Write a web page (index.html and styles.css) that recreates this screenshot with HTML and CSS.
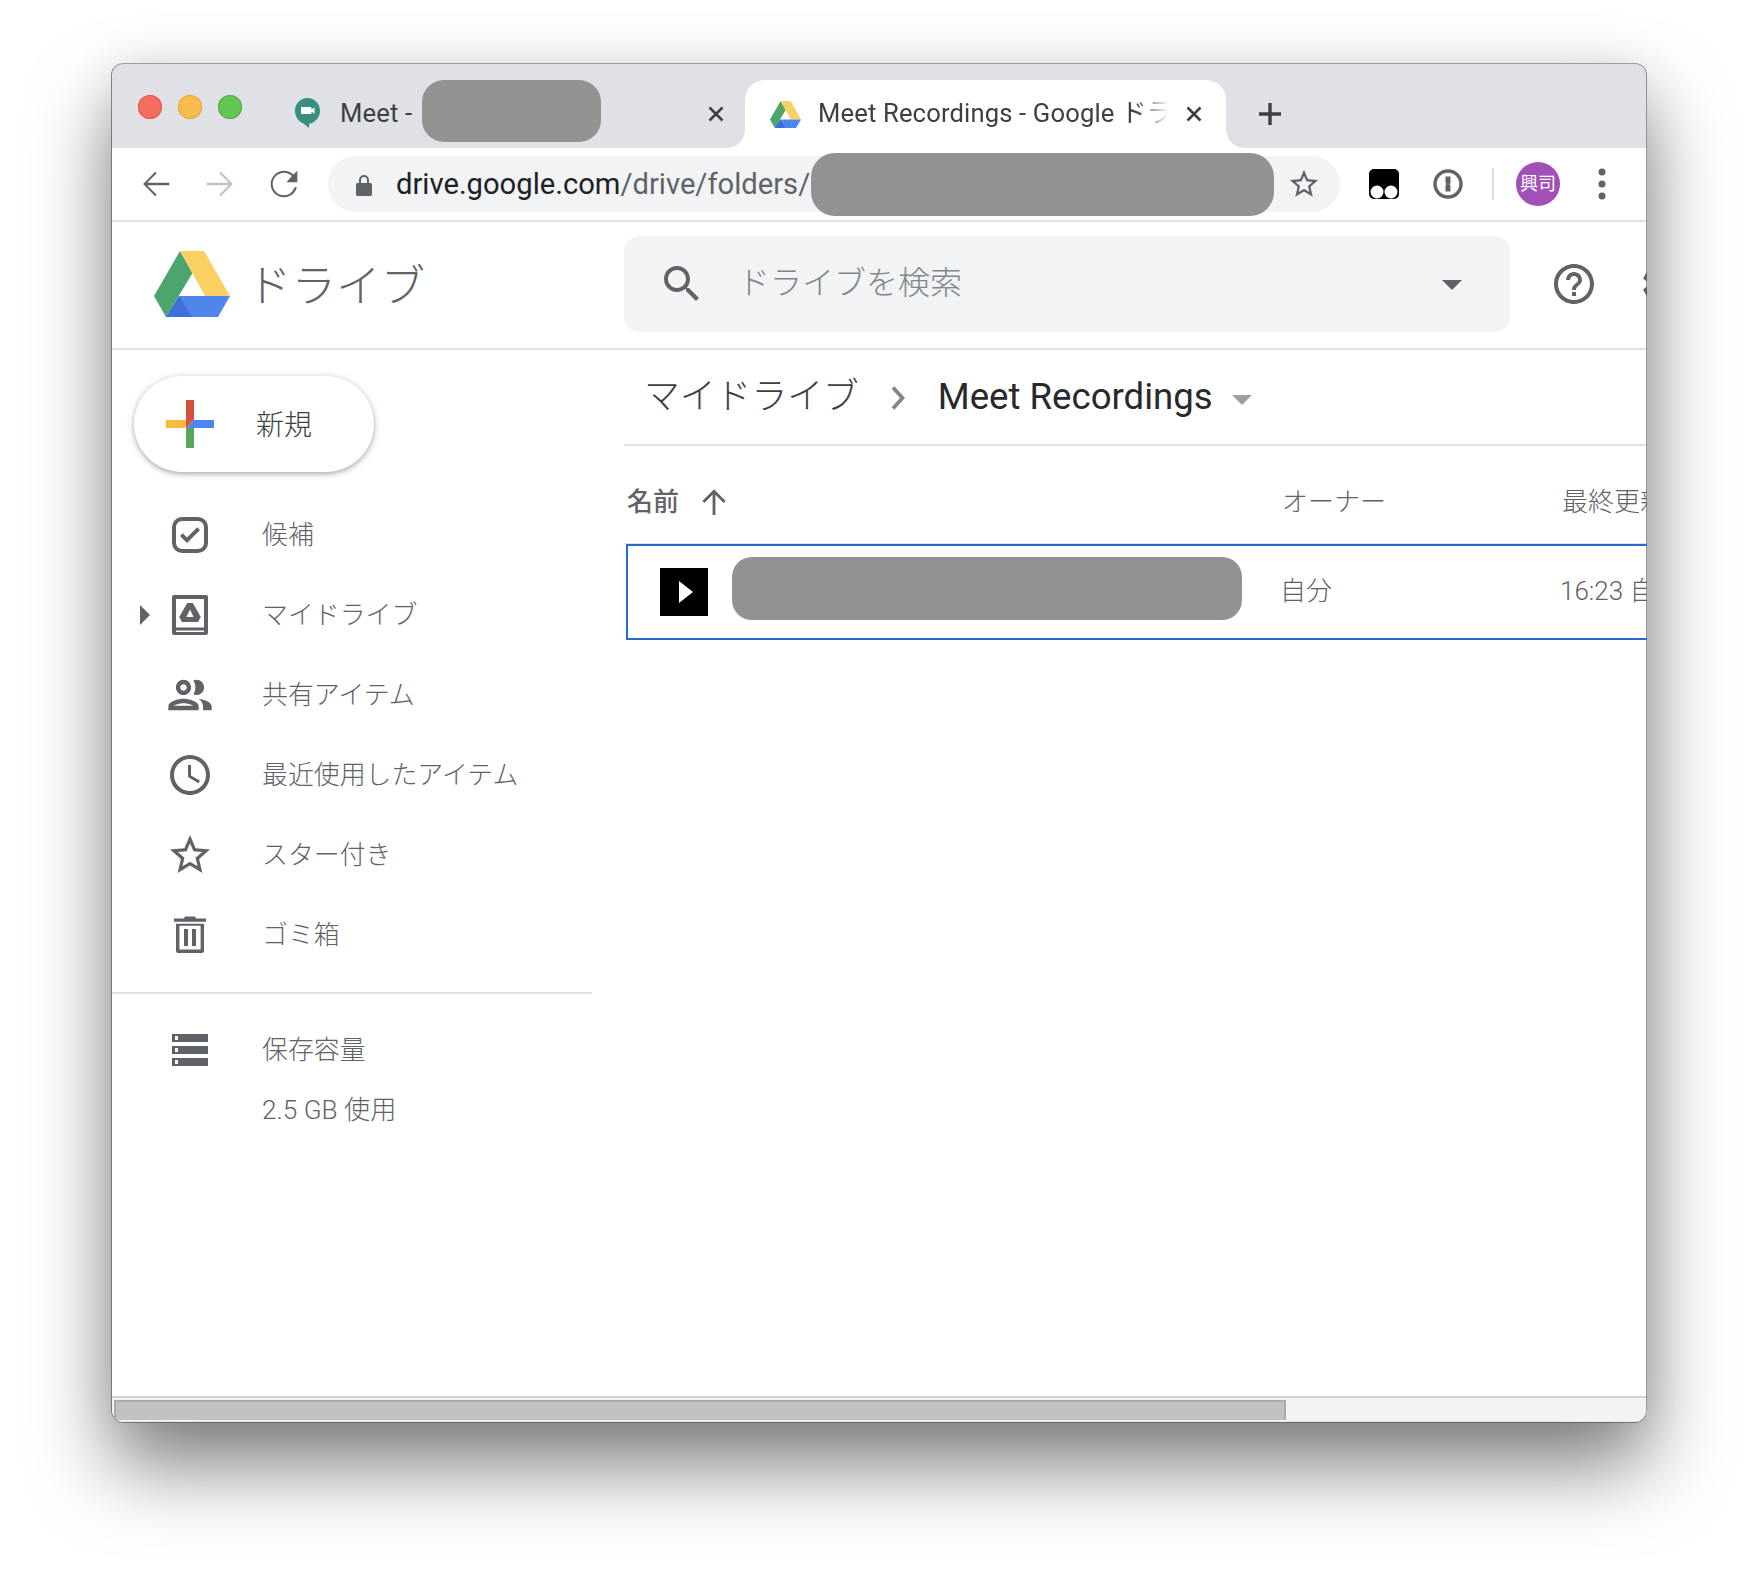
FILE: index.html
```html
<!DOCTYPE html>
<html lang="ja">
<head>
<meta charset="utf-8">
<title>Meet Recordings - Google ドライブ</title>
<link rel="stylesheet" href="styles.css">
</head>
<body>
<div class="window">
  <div class="tabstrip">
    <div class="lights"><i class="light red"></i><i class="light yellow"></i><i class="light green"></i></div>
    <div class="tab tab-meet">
      <svg class="fav-meet" viewBox="0 0 25 30"><path fill="#3a8e81" d="M12.5 0C19.4 0 25 5.6 25 12.5c0 6.6-4.6 12.2-11 13.4V30c-1.5-1.200-4-3.200-5.500-4.600C3.600 23.800 0 18.700 0 12.500 0 5.600 5.600 0 12.500 0z"/><path fill="#fff" d="M6 9h9.500c.6 0 1 .4 1 1v1.700l3-2.400v6.600l-3-2.400V15c0 .6-.4 1-1 1H6z"/></svg>
      <span class="tab-title">Meet -</span>
      <span class="redact redact-tab"></span>
      <svg class="tab-close" viewBox="0 0 20 20"><path d="M3.500 3.500l13 13M16.500 3.500l-13 13"/></svg>
    </div>
    <div class="tab tab-active">
      <svg class="fav-drive" viewBox="0 0 76 66"><use href="#drive-mark"/></svg>
      <span class="tab-title tab-fade">Meet Recordings - Google ドライブ</span>
      <svg class="tab-close" viewBox="0 0 20 20"><path d="M3.500 3.500l13 13M16.500 3.500l-13 13"/></svg>
    </div>
    <svg class="newtab" viewBox="0 0 24 24"><path d="M12 1v22M1 12h22"/></svg>
  </div>

  <div class="toolbar">
    <svg class="tool" viewBox="0 0 24 24"><path d="M20 11.200H6.700l5.700-5.700-.9-.9L4.300 12l7.200 7.400.9-.9-5.700-5.700H20z"/></svg>
    <svg class="tool tool-off" viewBox="0 0 24 24"><path d="M4 11.200h13.300l-5.700-5.700.9-.9 7.200 7.400-7.200 7.400-.9-.9 5.700-5.700H4z"/></svg>
    <svg class="tool" viewBox="0 0 24 24"><path d="M17.650 6.350C16.200 4.900 14.210 4 12 4c-4.420 0-7.990 3.580-7.990 8s3.570 8 7.990 8c3.730 0 6.840-2.550 7.730-6h-1.400c-.82 2.800-3.340 4.800-6.330 4.800-3.760 0-6.800-3.040-6.800-6.800s3.040-6.800 6.800-6.800c1.880 0 3.550.78 4.770 2L13.500 11H20V4z"/></svg>
    <div class="omnibox">
      <svg class="lock" viewBox="0 0 16 22"><path d="M3 9V6a5 5 0 0 1 10 0v3h1.500c.8 0 1.500.7 1.500 1.500v10c0 .8-.7 1.500-1.500 1.500h-13C.7 22 0 21.300 0 20.500v-10C0 9.700.7 9 1.500 9zm2 0h6V6a3 3 0 0 0-6 0z"/></svg>
      <span class="url"><b>drive.google.com</b>/drive/folders/</span>
      <span class="redact redact-url"></span>
      <svg class="star" viewBox="0 0 24 24"><path d="M22 9.240l-7.190-.62L12 2 9.190 8.630 2 9.240l5.460 4.730L5.820 21 12 17.270 18.180 21l-1.630-7.030L22 9.240zM12 15.400l-3.760 2.270 1-4.280-3.320-2.880 4.380-.38L12 6.100l1.710 4.040 4.380.38-3.320 2.880 1 4.280L12 15.400z"/></svg>
    </div>
    <svg class="ext-tamper" viewBox="0 0 30 30"><rect width="30" height="30" rx="5"/><circle cx="8" cy="23" r="6.500" fill="#fff"/><circle cx="22" cy="23" r="6.500" fill="#fff"/></svg>
    <svg class="ext-1p" viewBox="0 0 30 30"><circle cx="15" cy="15" r="13" fill="none" stroke="#5f6368" stroke-width="3.400"/><path fill="#5f6368" d="M12.500 7.500h5v6.500l-1 1.200 1 1.300v6h-5v-6.500l1-1-1-1z"/></svg>
    <span class="ext-sep"></span>
    <span class="avatar">興司</span>
    <svg class="ext-menu" viewBox="0 0 8 32"><circle cx="4" cy="4" r="3.500"/><circle cx="4" cy="16" r="3.500"/><circle cx="4" cy="28" r="3.500"/></svg>
  </div>

  <div class="drive-head">
    <div class="brand">
      <svg class="brand-logo" viewBox="0 0 76 66">
        <defs>
          <g id="drive-mark">
            <path fill="#4ba56c" d="M26 0l12.500 22L12 66 0 45z"/>
            <path fill="#fbd063" d="M26 0h24l26 45H51z"/>
            <path fill="#4f86ec" d="M25 45h51L64 66H12z"/>
            <path fill="#3f6fd8" d="M25 45l13 21H12z"/>
          </g>
        </defs>
        <use href="#drive-mark"/>
      </svg>
      <span class="brand-name">ドライブ</span>
    </div>
    <div class="search">
      <svg class="search-icon" viewBox="0 0 24 24"><path d="M15.500 14h-.79l-.28-.27C15.410 12.590 16 11.110 16 9.500 16 5.910 13.090 3 9.500 3S3 5.910 3 9.500 5.910 16 9.500 16c1.610 0 3.090-.59 4.230-1.570l.27.28v.79l5 4.990L20.490 19l-4.990-5zm-6 0C7.010 14 5 11.990 5 9.500S7.010 5 9.500 5 14 7.010 14 9.500 11.990 14 9.500 14z"/></svg>
      <span class="search-text">ドライブを検索</span>
      <span class="caret caret-search"></span>
    </div>
    <svg class="help" viewBox="0 0 24 24"><path d="M11 18h2v-2h-2v2zm1-16C6.480 2 2 6.480 2 12s4.480 10 10 10 10-4.480 10-10S17.520 2 12 2zm0 18c-4.410 0-8-3.590-8-8s3.590-8 8-8 8 3.590 8 8-3.590 8-8 8zm0-14c-2.210 0-4 1.790-4 4h2c0-1.100.9-2 2-2s2 .9 2 2c0 2-3 1.750-3 5h2c0-2.250 3-2.500 3-5 0-2.210-1.790-4-4-4z"/></svg>
    <svg class="gear" viewBox="0 0 24 24"><path d="M19.140 12.940c.04-.3.060-.61.060-.94 0-.32-.02-.64-.07-.94l2.030-1.580c.18-.14.23-.41.120-.61l-1.920-3.320c-.12-.22-.37-.29-.59-.22l-2.390.96c-.5-.38-1.030-.7-1.620-.94l-.36-2.540c-.04-.24-.24-.41-.48-.41h-3.840c-.24 0-.43.170-.47.410l-.36 2.540c-.59.240-1.130.57-1.620.94l-2.390-.96c-.22-.08-.47 0-.59.220L2.740 8.870c-.12.210-.08.470.12.610l2.030 1.580c-.05.300-.09.630-.09.940s.02.640.07.940l-2.030 1.580c-.18.140-.23.410-.12.610l1.920 3.320c.12.220.37.290.59.220l2.390-.96c.5.380 1.030.7 1.620.94l.36 2.540c.05.240.24.410.48.410h3.840c.24 0 .44-.17.470-.41l.36-2.540c.59-.24 1.130-.56 1.620-.94l2.390.96c.22.080.47 0 .59-.22l1.920-3.320c.12-.22.070-.47-.12-.61l-2.010-1.580z"/></svg>
  </div>

  <div class="drive-body">
    <aside class="sidebar">
      <div class="new-btn">
        <svg class="new-plus" viewBox="0 0 48 48">
          <path fill="#d94f3d" d="M20 0h8v20l-8 8z"/>
          <path fill="#f5bb41" d="M0 20h20v8H0z"/>
          <path fill="#57a65b" d="M20 28h8v20h-8z"/>
          <path fill="#4f86ec" d="M28 20h20v8H20z"/>
        </svg>
        <span class="new-label">新規</span>
      </div>
      <nav class="nav">
        <div class="nav-row">
          <span class="nav-arrow"></span>
          <svg class="nav-icon" viewBox="0 0 24 24"><path fill-rule="evenodd" d="M8 3h8a5 5 0 0 1 5 5v8a5 5 0 0 1-5 5H8a5 5 0 0 1-5-5V8a5 5 0 0 1 5-5zm0 2a3 3 0 0 0-3 3v8a3 3 0 0 0 3 3h8a3 3 0 0 0 3-3V8a3 3 0 0 0-3-3z"/><path d="M10.500 16L7 12.500l1.400-1.400 2.100 2.100 5.100-5.100L17 9.500z"/></svg>
          <span class="nav-label">候補</span>
        </div>
        <div class="nav-row">
          <span class="nav-arrow"><i class="tri"></i></span>
          <svg class="nav-icon" viewBox="0 0 24 24"><path fill-rule="evenodd" d="M4 2h16c.6 0 1 .4 1 1v18c0 .6-.4 1-1 1H4c-.6 0-1-.4-1-1V3c0-.6.4-1 1-1zm1 2v14.300h14V4zm0 15.800v.7h14v-.7z"/><path fill-rule="evenodd" d="M10.600 6h2.800l4 7-1.400 2.500H8L6.600 13zm1.400 3.200L10.200 13h3.600z"/></svg>
          <span class="nav-label">マイドライブ</span>
        </div>
        <div class="nav-row">
          <span class="nav-arrow"></span>
          <svg class="nav-icon nav-icon-wide" viewBox="0 0 24 24"><path d="M9 13.750c-2.340 0-7 1.170-7 3.500V19h14v-1.750c0-2.330-4.660-3.500-7-3.500zM4.340 17c.84-.58 2.870-1.250 4.660-1.250s3.820.67 4.660 1.250H4.340zM9 12c1.930 0 3.500-1.570 3.500-3.500S10.930 5 9 5 5.500 6.570 5.500 8.500 7.070 12 9 12zm0-5c.83 0 1.500.67 1.500 1.500S9.830 10 9 10s-1.500-.67-1.500-1.500S8.170 7 9 7zm7.040 6.810c1.160.84 1.960 1.960 1.960 3.440V19h4v-1.750c0-2.020-3.500-3.170-5.960-3.440zM15 12c1.930 0 3.500-1.570 3.500-3.500S16.930 5 15 5c-.54 0-1.040.13-1.500.35.630.89 1 1.980 1 3.150s-.37 2.260-1 3.150c.46.220.96.350 1.500.350z"/></svg>
          <span class="nav-label">共有アイテム</span>
        </div>
        <div class="nav-row">
          <span class="nav-arrow"></span>
          <svg class="nav-icon" viewBox="0 0 24 24"><path d="M11.990 2C6.470 2 2 6.480 2 12s4.470 10 9.990 10C17.520 22 22 17.520 22 12S17.520 2 11.990 2zM12 20c-4.420 0-8-3.580-8-8s3.580-8 8-8 8 3.580 8 8-3.580 8-8 8zm.5-13H11v6l5.250 3.150.75-1.230-4.500-2.670z"/></svg>
          <span class="nav-label">最近使用したアイテム</span>
        </div>
        <div class="nav-row">
          <span class="nav-arrow"></span>
          <svg class="nav-icon" viewBox="0 0 24 24"><path d="M22 9.240l-7.190-.62L12 2 9.190 8.630 2 9.240l5.460 4.730L5.820 21 12 17.270 18.180 21l-1.630-7.030L22 9.240zM12 15.400l-3.760 2.270 1-4.280-3.320-2.880 4.380-.38L12 6.100l1.710 4.040 4.380.38-3.320 2.880 1 4.280L12 15.400z"/></svg>
          <span class="nav-label">スター付き</span>
        </div>
        <div class="nav-row">
          <span class="nav-arrow"></span>
          <svg class="nav-icon" viewBox="0 0 24 24"><path fill-rule="evenodd" d="M9.500 2.800h5l.5 1h5v1.600H4V3.800h5zM5 6.400h14V20c0 .6-.5 1-1 1H6c-.5 0-1-.4-1-1zm1.700 1V19.300h10.600V7.400zM9 9h2v8.500H9zm4 0h2v8.500h-2z"/></svg>
          <span class="nav-label">ゴミ箱</span>
        </div>
      </nav>
      <div class="side-rule"></div>
      <div class="nav-row">
        <span class="nav-arrow"></span>
        <svg class="nav-icon" viewBox="0 0 24 24"><path fill-rule="evenodd" d="M3 4h18v4H3zm1.500 1v2h1.500V5zM3 10h18v4H3zm1.500 1v2h1.500v-2zM3 16h18v4H3zm1.500 1v2h1.500v-2z"/></svg>
        <span class="nav-label">保存容量</span>
      </div>
      <div class="quota">2.5 GB 使用</div>
    </aside>

    <main class="main">
      <div class="crumbs">
        <span class="crumb-root">マイドライブ</span>
        <svg class="crumb-sep" viewBox="0 0 14 24"><path d="M2 1.500l9.500 10.500L2 22.500" /></svg>
        <span class="crumb-current">Meet Recordings</span>
        <span class="caret caret-crumb"></span>
      </div>
      <div class="list-head">
        <span class="col-name head-name"><span class="cell-text">名前</span><svg class="sort" viewBox="0 0 24 24"><path d="M12 2l-10 10 1.700 1.700 7.100-7.100V24h2.400V6.600l7.100 7.100L22 12z"/></svg></span>
        <span class="col-owner cell-text">オーナー</span>
        <span class="col-date cell-text">最終更新</span>
      </div>
      <div class="file-row">
        <span class="col-name file-name">
          <span class="thumb"><i class="play"></i></span>
          <span class="redact redact-file"></span>
        </span>
        <span class="col-owner cell-text">自分</span>
        <span class="col-date cell-text">16:23 自分</span>
      </div>
    </main>
  </div>

  <div class="hscroll"><div class="hthumb"></div></div>
</div>
</body>
</html>
```

FILE: styles.css
```css
* { box-sizing: border-box; }
html, body { margin: 0; background: #fff; }
body {
  width: 1758px;
  height: 1582px;
  padding: 63px 111px 0 112px;
  overflow: hidden;
  font-family: Roboto, "Noto Sans CJK JP", sans-serif;
  color: #5f6368;
}
.window {
  position: relative;
  width: 1535px;
  height: 1359px;
  display: flex;
  flex-direction: column;
  background: #fff;
  border-radius: 12px;
  overflow: hidden;
  box-shadow: -1px 0 0 rgba(90, 90, 90, .7), 0 1px 0 rgba(90, 90, 90, .7), 0 44px 80px rgba(0, 0, 0, .5), 0 0 50px rgba(0, 0, 0, .08);
}
.window::after {
  content: "";
  position: absolute;
  inset: 0;
  border-radius: 12px;
  box-shadow: inset 0 1px 0 rgba(90, 90, 90, .5), inset -1px 0 0 rgba(90, 90, 90, .6);
  pointer-events: none;
}
svg { display: block; flex: none; fill: #5f6368; }

/* tab strip */
.tabstrip {
  height: 85px;
  flex: none;
  display: flex;
  align-items: flex-end;
  background: #dfe1e6;
  padding-left: 26px;
}
.lights { display: flex; gap: 16px; align-self: flex-start; padding-top: 32px; width: 130px; }
.light { width: 24px; height: 24px; border-radius: 50%; display: block; }
.red { background: #f46d60; box-shadow: inset 0 0 0 1px #e2574a; }
.yellow { background: #f9bd4d; box-shadow: inset 0 0 0 1px #e3a63a; }
.green { background: #62c554; box-shadow: inset 0 0 0 1px #53ad46; }
.tab {
  height: 68px;
  display: flex;
  align-items: center;
  position: relative;
  font-size: 25.600px;
  color: #3c4043;
  white-space: nowrap;
}
.tab-meet { width: 477px; padding-left: 27px; }
.fav-meet { width: 25px; height: 30px; margin: -2px 20px 0 0; }
.tab-title { letter-spacing: .15px; line-height: 34px; margin-top: -2px; }
.tab-close { width: 20px; height: 20px; fill: none; stroke: #3c4043; stroke-width: 2.600; }
.tab-meet .tab-close { margin-left: auto; margin-right: 19px; }
.tab-active {
  width: 481px;
  padding: 0 22px 0 25px;
  background: #fff;
  border-radius: 20px 20px 0 0;
}
.tab-active::before, .tab-active::after {
  content: "";
  position: absolute;
  bottom: 0;
  width: 18px;
  height: 18px;
}
.tab-active::before { left: -18px; background: radial-gradient(circle at 0 0, transparent 17.500px, #fff 18px); }
.tab-active::after { right: -18px; background: radial-gradient(circle at 100% 0, transparent 17.500px, #fff 18px); }
.fav-drive { width: 31px; height: 27px; margin-right: 17px; }
.tab-fade {
  width: 351px;
  overflow: hidden;
  -webkit-mask-image: linear-gradient(90deg, #000 90%, transparent 100%);
  mask-image: linear-gradient(90deg, #000 90%, transparent 100%);
}
.tab-active .tab-close { margin-left: auto; }
.newtab { width: 24px; height: 24px; margin: 0 0 22px 32px; fill: none; stroke: #3c4043; stroke-width: 3.400; }

/* blurred-out areas */
.redact { display: block; flex: none; background: #929292; }
.redact-tab { width: 179px; height: 62px; margin: -6px 0 0 10px; border-radius: 22px; }
.redact-url { width: 463px; height: 63px; border-radius: 24px; }
.redact-file { width: 510px; height: 63px; margin: -7px 0 0 24px; border-radius: 20px; }

/* toolbar */
.toolbar {
  height: 74px;
  flex: none;
  display: flex;
  align-items: center;
  padding-left: 24px;
  background: #fff;
  border-bottom: 2px solid #dfe1e6;
}
.tool { width: 40px; height: 40px; margin-right: 24px; }
.tool-off { fill: #bdc1c6; }
.omnibox {
  width: 1012px;
  height: 56px;
  flex: none;
  display: flex;
  align-items: center;
  padding-left: 28px;
  background: #f1f3f4;
  border-radius: 28px;
}
.lock { width: 16px; height: 22px; margin: 2px 24px 0 0; }
.url { font-size: 29.200px; color: #5f6368; white-space: nowrap; width: 415px; flex: none; }
.url b { font-weight: 400; color: #202124; }
.star { width: 34px; height: 34px; margin-left: 13px; }
.ext-tamper { width: 30px; height: 30px; margin-left: 29px; fill: #000; }
.ext-1p { width: 30px; height: 30px; margin-left: 34px; }
.ext-sep { width: 2px; height: 32px; margin-left: 29px; background: #dadce0; flex: none; }
.avatar {
  width: 44px;
  height: 44px;
  flex: none;
  margin-left: 22px;
  border-radius: 50%;
  background: #a24fb8;
  color: #fff;
  font-size: 18px;
  line-height: 44px;
  text-align: center;
}
.ext-menu { width: 8px; height: 32px; margin-left: 38px; }

/* drive header */
.drive-head {
  height: 128px;
  flex: none;
  display: flex;
  align-items: center;
  padding-bottom: 2px;
  border-bottom: 2px solid #dfe1e6;
}
.brand { width: 512px; flex: none; display: flex; align-items: center; padding-left: 42px; }
.brand-logo { width: 76px; height: 66px; margin-right: 17px; }
.brand-name { font-size: 44.500px; font-weight: 300; color: #5f6368; padding-bottom: 4px; }
.search {
  width: 886px;
  height: 96px;
  flex: none;
  display: flex;
  align-items: center;
  padding: 0 48px 0 34px;
  background: #f1f3f4;
  border-radius: 16px;
}
.search-icon { width: 48px; height: 48px; margin-right: 32px; }
.search-text { font-size: 32px; font-weight: 300; color: #80868b; flex: 1; padding-bottom: 8px; }
.caret { display: block; flex: none; width: 0; height: 0; border-style: solid; border-color: #5f6368 transparent transparent; }
.caret-search { border-width: 10px 10px 0; margin-top: 2px; }
.help { width: 48px; height: 48px; margin-left: 40px; }
.gear { width: 48px; height: 48px; margin-left: 40px; }

/* sidebar */
.drive-body { flex: 1; min-height: 0; display: flex; }
.sidebar { width: 480px; flex: none; padding-top: 26px; }
.new-btn {
  width: 240px;
  height: 96px;
  margin-left: 22px;
  display: flex;
  align-items: center;
  padding-left: 32px;
  background: #fff;
  border-radius: 48px;
  box-shadow: 0 2px 5px rgba(60, 64, 67, .35), 0 1px 8px rgba(60, 64, 67, .15);
}
.new-plus { width: 48px; height: 48px; margin-right: 42px; }
.new-label { font-size: 28px; font-weight: 300; color: #3c4043; padding-bottom: 3px; }
.nav { margin-top: 23px; }
.nav-row { height: 80px; display: flex; align-items: center; }
.nav-arrow { width: 54px; flex: none; padding-left: 28px; }
.tri { display: block; width: 0; height: 0; border-style: solid; border-width: 10px 0 10px 10px; border-color: transparent transparent transparent #5f6368; }
.nav-icon { width: 48px; height: 48px; margin-right: 48px; }
.nav-icon-wide { width: 52px; height: 52px; margin: 0 46px 0 -2px; }
.nav-label, .quota { font-size: 25.900px; color: #5f6368; font-weight: 300; white-space: nowrap; }
.nav-label { padding-bottom: 5px; }
.side-rule { height: 2px; margin: 17px 0 16px; background: #dfe1e6; }
.quota { padding-left: 150px; margin-top: 0; line-height: 40px; font-size: 26.200px; }

/* main list */
.main { flex: 1; min-width: 0; margin-left: 32px; overflow: hidden; }
.crumbs {
  height: 96px;
  display: flex;
  align-items: center;
  padding-left: 20px;
  border-bottom: 2px solid #dfe1e6;
}
.crumb-root { font-size: 35.800px; font-weight: 300; color: #3c4043; padding-bottom: 9px; }
.crumb-sep { width: 14px; height: 24px; margin: 2px 33px 0 32px; fill: none; stroke: #80868b; stroke-width: 3.800; }
.crumb-current { font-size: 36.600px; color: #27292c; padding-bottom: 2px; }
.caret-crumb { border-width: 10px 10px 0; border-top-color: #9aa0a6; margin: 6px 0 0 19px; }
.list-head, .file-row { display: flex; align-items: center; width: 1100px; white-space: nowrap; font-size: 26px; font-weight: 300; color: #5f6368; }
.list-head { height: 98px; padding: 0 0 0 3px; border-bottom: 1px solid #dfe1e6; }
.col-name { width: 655px; flex: none; display: flex; align-items: center; }
.col-owner { width: 280px; flex: none; }
.head-name { font-weight: 500; color: #5f6368; }
.list-head .cell-text { padding-top: 9px; }
.file-row .cell-text { padding-bottom: 8px; }
.sort { width: 28px; height: 28px; margin: 13px 0 0 21px; }
.file-row { height: 96px; margin-left: 2px; border: 2px solid #2a66cf; }
.file-row .col-name { width: 652px; padding-left: 32px; }
.thumb { width: 48px; height: 48px; flex: none; background: #000; display: flex; align-items: center; justify-content: center; }
.play { display: block; width: 0; height: 0; margin-left: 4px; border-style: solid; border-width: 11px 0 11px 14px; border-color: transparent transparent transparent #fff; }

/* horizontal scroll bar */
.hscroll {
  height: 26px;
  flex: none;
  padding: 2px 0 2px 2px;
  background: #f3f3f3;
  border-top: 2px solid #d2d2d2;
  border-bottom: 1px solid #e8e8e8;
}
.hthumb { width: 1172px; height: 20px; background: #c2c2c2; border: 2px solid #aaa; border-bottom: 0; }
```
